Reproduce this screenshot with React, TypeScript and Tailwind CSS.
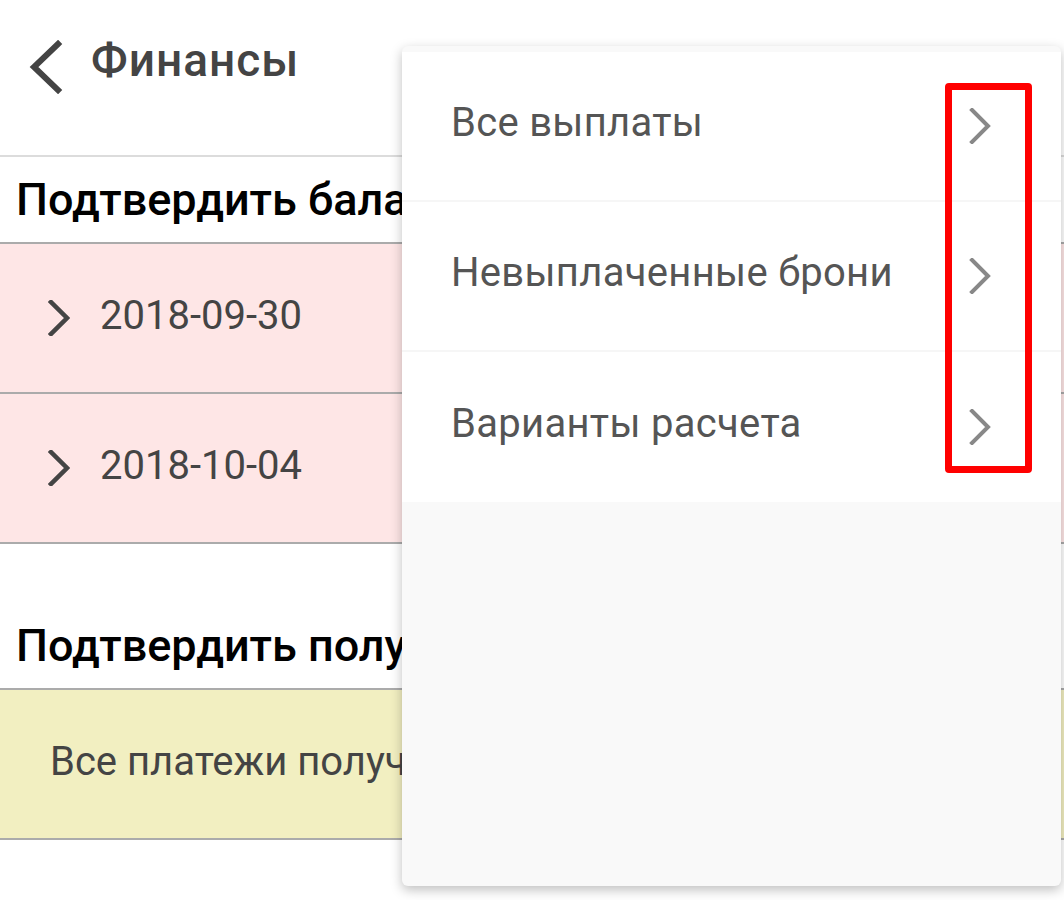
import React from 'react';

const font = { fontFamily: 'Roboto, "Noto Sans", sans-serif' };

function ChevronLeft() {
    return (
        <svg width="36" height="54" viewBox="0 0 36 54" className="shrink-0">
            <polyline points="30,4 6,27 30,50" fill="none" stroke="#444" strokeWidth="6" strokeLinecap="square" />
        </svg>
    );
}

function ChevronRight({ color = '#444', width = 4.5 }: { color?: string; width?: number }) {
    return (
        <svg width="22" height="36" viewBox="0 0 22 36" className="shrink-0">
            <polyline points="3,2 19,18 3,34" fill="none" stroke={color} strokeWidth={width} strokeLinecap="square" />
        </svg>
    );
}

const menuItems = ['Все выплаты', 'Невыплаченные брони', 'Варианты расчета'];

export default function App() {
    return (
        <div className="relative h-[900px] w-[1064px] overflow-hidden bg-white" style={font}>
            {/* Header */}
            <div className="border-b-2 border-[#dcdcdc]">
                <div className="flex h-[155px] items-start gap-[27px] pt-[40px] pl-[28px]">
                    <ChevronLeft />
                    <h1 className="mt-[-7px] text-[46px] leading-[1.2] font-medium tracking-[1px] text-[#444]">Финансы</h1>
                </div>
            </div>

            {/* Confirm balance */}
            <div className="flex h-[87px] items-center border-b-2 border-[#ababab] px-4">
                <h2 className="text-[45px] leading-none font-medium text-black">Подтвердить баланс</h2>
            </div>
            {['2018-09-30', '2018-10-04'].map((d) => (
                <div key={d} className="flex h-[150px] items-center gap-[30px] border-b-2 border-[#ababab] bg-[#fee6e6] pl-[48px]">
                    <ChevronRight />
                    <span className="mb-[4px] text-[40px] text-[#444]">{d}</span>
                </div>
            ))}

            {/* Confirm received */}
            <div className="mt-[59px] flex h-[87px] items-center border-b-2 border-[#ababab] px-4">
                <h2 className="text-[45px] leading-none font-medium text-black">Подтвердить получение</h2>
            </div>
            <div className="flex h-[150px] items-center border-b-2 border-[#ababab] bg-[#f2efc1] pl-[50px]">
                <span className="mb-[4px] text-[40px] text-[#444]">Все платежи получены</span>
            </div>

            {/* Dropdown menu */}
            <div className="absolute top-[46px] left-[402px] h-[840px] w-[659px] overflow-hidden rounded-[6px] bg-[#f9f9f9] pt-[6px] shadow-[0_4px_12px_rgba(0,0,0,0.25)]">
                <div className="bg-white">
                    {menuItems.map((item, i) => (
                        <div
                            key={item}
                            className={`flex h-[150px] items-center justify-between pr-[70px] pl-[49px] ${i < menuItems.length - 1 ? 'border-b-2 border-[#f6f6f6]' : ''}`}
                        >
                            <span className="mb-[6px] text-[40px] tracking-[0.3px] text-[#555]">{item}</span>
                            <ChevronRight color="#888" width={4} />
                        </div>
                    ))}
                </div>

                {/* highlight box */}
                <div className="absolute top-[37px] left-[543px] h-[390px] w-[87px] rounded-[4px] border-[7px] border-[#ff0000]" />
            </div>
        </div>
    );
}
